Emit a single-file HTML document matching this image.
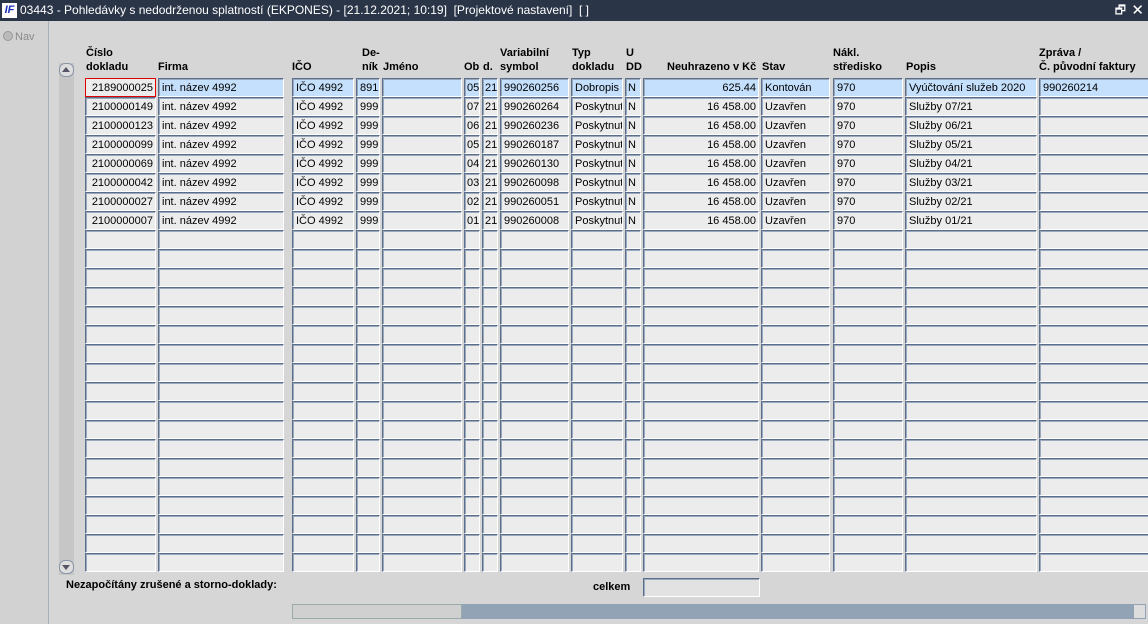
<!DOCTYPE html>
<html><head><meta charset="utf-8"><style>
body{margin:0;width:1148px;height:624px;overflow:hidden;background:#d6d6d6;font-family:"Liberation Sans",sans-serif;position:relative}
.title{position:absolute;left:0;top:0;width:1148px;height:21px;background:#2b3548;color:#fff;font-size:12px;line-height:21px}
.title .t{position:absolute;left:20px;top:0}
.logo{position:absolute;left:2px;top:3px;width:15px;height:15px;background:#fff;color:#1a2fb8;font:italic bold 11px "Liberation Sans",sans-serif;line-height:15px;text-align:center}
.left{position:absolute;left:0;top:21px;width:48px;height:603px;background:#d2d2d2;border-right:1px solid #a8b0bc}
.nav{position:absolute;left:3px;top:10px;font-size:11px;color:#8a8a8a}
.nav i{display:inline-block;width:8px;height:8px;border-radius:50%;background:#bbb;border:1px solid #999;vertical-align:-1px;margin-right:2px}
.h{position:absolute;font-weight:bold;font-size:11px;line-height:14px;color:#000}
.c{position:absolute;box-sizing:border-box;height:19px;background:#ececec;border-top:1px solid #5b6e8c;border-left:1px solid #5b6e8c;box-shadow:inset 1px 1px 0 #9aa8bc;border-right:1px solid #fff;border-bottom:1px solid #fff;font-size:11px;line-height:18px;padding-left:3px;white-space:nowrap;overflow:hidden;color:#000}
.sel .c{background:#c4e0fc}
.r{text-align:right;padding-right:2px}
.n{padding-left:2px}
.vs{position:absolute;left:59px;top:63px;width:15px;height:512px;background:#c6c6c6}
.btn{position:absolute;left:59px;width:15px;height:14px;background:#dedede;border:1px solid #8a96a8;box-sizing:border-box;border-radius:6px}
.hs{position:absolute;left:292px;top:604px;width:854px;height:15px;background:#93a3b6}
.thumb{position:absolute;left:0;top:0;width:170px;height:15px;background:#d0d0d0;border:1px solid #9aa;box-sizing:border-box}
.lbl{position:absolute;font-weight:bold;font-size:11px}
</style></head><body>
<div class="title"><div class="logo">IF</div><div class="t">03443 - Pohledávky s nedodrženou splatností (EKPONES) - [21.12.2021; 10:19] &nbsp;[Projektové nastavení] &nbsp;[ ]</div>
<div style="position:absolute;right:22px;top:0;font-size:12px">🗗</div><div style="position:absolute;right:4px;top:0;font-size:15px">✕</div></div>
<div class="left"><div class="nav"><i></i>Nav</div></div>

<div class="h" style="left:86px;top:46px">Číslo<br>dokladu</div>
<div class="h" style="left:158px;top:60px">Firma</div>
<div class="h" style="left:292px;top:60px">IČO</div>
<div class="h" style="left:362px;top:46px">De-<br>ník</div>
<div class="h" style="left:383px;top:60px">Jméno</div>
<div class="h" style="left:464px;top:60px">Ob</div>
<div class="h" style="left:483px;top:60px">d.</div>
<div class="h" style="left:500px;top:46px">Variabilní<br>symbol</div>
<div class="h" style="left:572px;top:46px">Typ<br>dokladu</div>
<div class="h" style="left:626px;top:46px">U<br>DD</div>
<div class="h" style="left:667px;top:60px">Neuhrazeno v Kč</div>
<div class="h" style="left:762px;top:60px">Stav</div>
<div class="h" style="left:833px;top:46px">Nákl.<br>středisko</div>
<div class="h" style="left:906px;top:60px">Popis</div>
<div class="h" style="left:1039px;top:46px">Zpráva /<br>Č. původní faktury</div>

<div class="vs"></div>
<div class="btn" style="top:63px"></div>
<div class="btn" style="top:560px"></div>
<div style="position:absolute;left:62px;top:67px;width:0;height:0;border-left:4px solid transparent;border-right:4px solid transparent;border-bottom:5px solid #556"></div>
<div style="position:absolute;left:62px;top:565px;width:0;height:0;border-left:4px solid transparent;border-right:4px solid transparent;border-top:5px solid #556"></div>

<div id="g"></div>

<div class="lbl" style="left:66px;top:579px">Nezapočítány zrušené a storno-doklady:</div>
<div class="lbl" style="left:593px;top:581px">celkem</div>
<div class="c" style="left:643px;top:578px;width:117px;height:19px;background:#e2e2e2"></div>
<div class="hs"><div class="thumb"></div><div style="position:absolute;right:1px;top:1px;width:11px;height:13px;background:#ddd"></div></div>

<script>
var cols=[[85,71],[158,126],[292,62],[356,24],[382,80],[464,16],[482,16],[500,69],[571,52],[625,16],[643,116,1],[761,69],[833,70],[905,132],[1039,112]];
var data=[
["2189000025","int. název 4992","IČO 4992","891","","05","21","990260256","Dobropis","N","625.44","Kontován","970","Vyúčtování služeb 2020","990260214"],
["2100000149","int. název 4992","IČO 4992","999","","07","21","990260264","Poskytnuté","N","16 458.00","Uzavřen","970","Služby 07/21",""],
["2100000123","int. název 4992","IČO 4992","999","","06","21","990260236","Poskytnuté","N","16 458.00","Uzavřen","970","Služby 06/21",""],
["2100000099","int. název 4992","IČO 4992","999","","05","21","990260187","Poskytnuté","N","16 458.00","Uzavřen","970","Služby 05/21",""],
["2100000069","int. název 4992","IČO 4992","999","","04","21","990260130","Poskytnuté","N","16 458.00","Uzavřen","970","Služby 04/21",""],
["2100000042","int. název 4992","IČO 4992","999","","03","21","990260098","Poskytnuté","N","16 458.00","Uzavřen","970","Služby 03/21",""],
["2100000027","int. název 4992","IČO 4992","999","","02","21","990260051","Poskytnuté","N","16 458.00","Uzavřen","970","Služby 02/21",""],
["2100000007","int. název 4992","IČO 4992","999","","01","21","990260008","Poskytnuté","N","16 458.00","Uzavřen","970","Služby 01/21",""]];
var h="";
for(var r=0;r<26;r++){var y=78+r*19;h+='<div class="'+(r==0?'sel':'')+'">';
for(var i=0;i<cols.length;i++){var c=cols[i];var t=data[r]?data[r][i]:"";
var cls="c"+((i==0||i==10)?" r":"")+((i==5||i==6||i==9)?" n":"");var st="left:"+c[0]+"px;top:"+y+"px;width:"+c[1]+"px;";
if(r==0&&i==0)st+="border:1px solid #e00000;box-shadow:none;background:#ececec;";
h+='<div class="'+cls+'" style="'+st+'">'+t+'</div>';}
h+='</div>';}
document.getElementById("g").innerHTML=h;
</script>
</body></html>
